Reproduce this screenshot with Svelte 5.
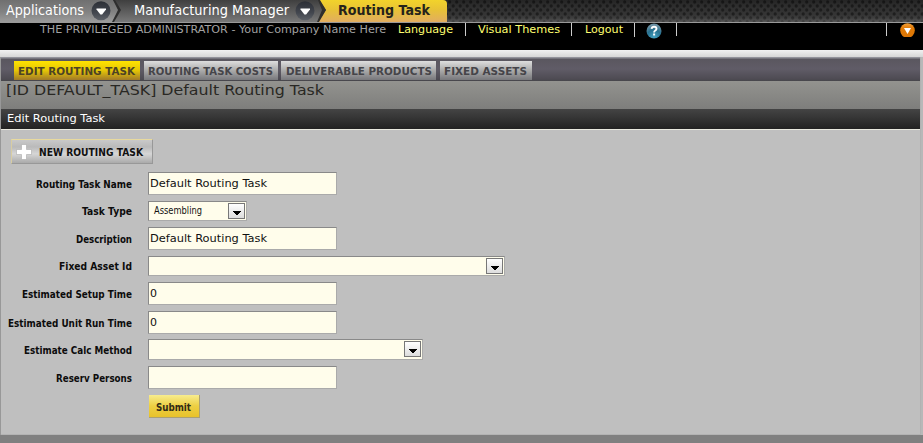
<script>
  const tabs = [
    { label: 'EDIT ROUTING TASK', width: 126, text: 117, active: true },
    { label: 'ROUTING TASK COSTS', width: 134, text: 125 },
    { label: 'DELIVERABLE PRODUCTS', width: 155, text: 146 },
    { label: 'FIXED ASSETS', width: 92, text: 83 }
  ];
  const fields = [
    { label: 'Routing Task Name', value: 'Default Routing Task', width: 189, height: 23, gap: 6, text: 96 },
    { label: 'Task Type', value: 'Assembling', width: 99, height: 20, gap: 6, text: 50, select: true },
    { label: 'Description', value: 'Default Routing Task', width: 189, height: 23, gap: 6, text: 56 },
    { label: 'Fixed Asset Id', value: '', width: 357, height: 20, gap: 6, text: 73, select: true },
    { label: 'Estimated Setup Time', value: '0', width: 189, height: 23, gap: 6, text: 110 },
    { label: 'Estimated Unit Run Time', value: '0', width: 189, height: 23, gap: 5, text: 124 },
    { label: 'Estimate Calc Method', value: '', width: 275, height: 21, gap: 6, text: 108, select: true },
    { label: 'Reserv Persons', value: '', width: 189, height: 23, gap: 6, text: 76 }
  ];
</script>

{#snippet fit(label, width, size, weight, color)}
  <svg class="fit" {width} height="20" style:overflow="visible">
    <text x="0" y="14" textLength={width} lengthAdjust="spacingAndGlyphs" font-size={size} font-weight={weight} fill={color}>{label}</text>
  </svg>
{/snippet}

{#snippet chevron(id)}
  <svg class="chev" width="20" height="20" viewBox="0 0 20 20">
    <defs><linearGradient id={id} x2="0" y2="1"><stop stop-color="#2c2f36"/><stop offset=".6" stop-color="#42464e"/><stop offset="1" stop-color="#5c6067"/></linearGradient></defs>
    <circle cx="10" cy="9.700" r="9.5" fill="url(#{id})"/>
    <path d="M5.500 7.500h9.500v1l-3.900 5h-1.700l-3.900-5z" fill="#fff"/>
  </svg>
{/snippet}

<div class="page">
  <header>
    <svg class="mesh" width="923" height="22">
      <defs>
        <pattern id="mesh" width="7" height="8" patternUnits="userSpaceOnUse">
          <rect width="7" height="8" fill="#343434"/>
          <circle cx="1.7" cy="2" r="1.65" fill="#1c1c1c"/>
          <circle cx="5.2" cy="6" r="1.65" fill="#1c1c1c"/>
        </pattern>
        <linearGradient id="shade" x2="0" y2="1"><stop stop-color="#000" stop-opacity=".3"/><stop offset=".65" stop-color="#333" stop-opacity=".1"/><stop offset="1" stop-color="#aaa" stop-opacity=".3"/></linearGradient>
        <linearGradient id="grey" x2="0" y2="1"><stop stop-color="#707070"/><stop offset=".5" stop-color="#808080"/><stop offset="1" stop-color="#9b9b9b"/></linearGradient>
        <linearGradient id="dark" x2="0" y2="1"><stop stop-color="#3f3f3f"/><stop offset="1" stop-color="#787878"/></linearGradient>
        <linearGradient id="gold" x2="0" y2="1"><stop stop-color="#f2d32b"/><stop offset=".45" stop-color="#e8c236"/><stop offset="1" stop-color="#e2ad61"/></linearGradient>
      </defs>
      <rect width="923" height="22" fill="url(#mesh)"/>
      <rect width="923" height="22" fill="url(#shade)"/>
      <path d="M319 0H443Q447 0 447 4V22H319Z" fill="url(#gold)"/>
      <path d="M110 0H319L326 10L318 22H110Z" fill="url(#dark)"/>
      <path d="M318 0h2l6 10-7 12h-2l5-12z" fill="#302f2c"/>
      <path d="M0 0H113L120 10L112 22H0Z" fill="url(#grey)"/>
      <path d="M113 0h2l6 10-7 12h-2l6-12z" fill="#2e2e2e"/>
    </svg>
    <nav>
      <span class="app a1">{@render fit('Applications', 78, 13.3, 400, '#fff')}</span>
      <span class="c1">{@render chevron('c1')}</span>
      <span class="app a2">{@render fit('Manufacturing Manager', 155, 13.3, 400, '#fff')}</span>
      <span class="c2">{@render chevron('c2')}</span>
      <span class="app a3">{@render fit('Routing Task', 92, 13.3, 700, '#25231b')}</span>
    </nav>
  </header>

  <div class="userbar">
    <span class="u who">{@render fit('THE PRIVILEGED ADMINISTRATOR - Your Company Name Here', 346, 10, 400, '#a2a2a2')}</span>
    <span class="u lang">{@render fit('Language', 55, 10, 400, '#ffff70')}</span>
    <i class="bar b1"></i>
    <span class="u themes">{@render fit('Visual Themes', 82, 10, 400, '#ffff70')}</span>
    <i class="bar b2"></i>
    <span class="u logout">{@render fit('Logout', 38, 10, 400, '#ffff70')}</span>
    <i class="bar b3"></i>
    <svg class="help" width="16" height="16" viewBox="0 0 16 16">
      <defs><radialGradient id="blue" cx=".5" cy=".9" r=".8"><stop stop-color="#46a4c4"/><stop offset=".6" stop-color="#27708f"/><stop offset="1" stop-color="#6c91a3"/></radialGradient></defs>
      <circle cx="8" cy="8" r="7.5" fill="url(#blue)"/>
      <path d="M5.6 5.9Q5.8 3.7 8.1 3.7q2.4 0 2.4 2 0 1.1-1.2 1.8Q8.1 8.200 8.100 9.500" fill="none" stroke="#fff" stroke-width="1.9"/>
      <rect x="7.100" y="10.500" width="2" height="2" fill="#fff"/>
    </svg>
    <i class="bar b4"></i>
    <i class="bar b5"></i>
    <svg class="drop" width="15" height="14" viewBox="0 0 15 14">
      <defs><linearGradient id="orange" x2="0" y2="1"><stop stop-color="#f3a13a"/><stop offset=".35" stop-color="#e17a06"/><stop offset="1" stop-color="#dc7606"/></linearGradient></defs>
      <circle cx="7.500" cy="7.500" r="7.300" fill="url(#orange)"/>
      <path d="M4 5h7L7.500 11z" fill="#fff"/>
    </svg>
  </div>
  <div class="rim"></div>

  <main>
    <div class="tabs">
      {#each tabs as tab}
        <div class="tab" class:active={tab.active} style:width="{tab.width}px">
          {@render fit(tab.label, tab.text, 10, 700, tab.active ? '#4d4324' : '#454449')}
        </div>
      {/each}
    </div>
    <div class="heading">{@render fit('[ID DEFAULT_TASK] Default Routing Task', 318, 14.5, 400, '#292824')}</div>
    <div class="title">{@render fit('Edit Routing Task', 98, 11.3, 400, '#fff')}</div>
    <section>
      <div class="new">
        <svg width="18" height="18" viewBox="0 0 18 18"><path d="M6.500 1.500h5v5h5v5h-5v5h-5v-5h-5v-5h5z" fill="#fff" stroke="#aaa" stroke-width=".6"/></svg>
        <span class="newtext">{@render fit('NEW ROUTING TASK', 104, 10.3, 700, '#111')}</span>
      </div>
      <form>
        {#each fields as f}
          <div class="row" style:height="{f.height}px" style:margin-bottom="{f.gap}px">
            <div class="label">{@render fit(f.label, f.text, 9.8, 700, '#0c0c0c')}</div>
            <div class="control" class:select={f.select} style:width="{f.width}px">
              {#if f.select}
                <span class="choice">{#if f.value}{@render fit(f.value, 48, 9.7, 400, '#111')}{/if}</span>
                <svg class="arrow" width="17" height="16"><path d="M4 7h8v1h-1v1h-1v1H9v1H7v-1H6V9H5V8H4z" fill="#000"/></svg>
              {:else if f.value}
                {@render fit(f.value, f.value === '0' ? 7 : 117, 10.3, 400, '#111')}
              {/if}
            </div>
          </div>
        {/each}
        <div class="submit">{@render fit('Submit', 35, 10.3, 700, '#302a17')}</div>
      </form>
    </section>
  </main>
</div>

<style>
  :global(body) { background: #808080; overflow: hidden; }
  .page { width: 923px; height: 443px; background: #808080; font-family: "DejaVu Sans", Verdana, sans-serif; overflow: hidden; }
  .page * { box-sizing: border-box; }
  svg { display: block; flex-shrink: 0; }
  header { height: 22px; position: relative; }
  .mesh { position: absolute; inset: 0; }
  nav { position: relative; display: flex; height: 22px; }
  .app { margin-top: 1px; }
  .a1 { margin-left: 6px; }
  .c1 { margin: 1px 0 0 7px; }
  .a2 { margin-left: 23px; }
  .c2 { margin: 1px 0 0 6px; }
  .a3 { margin-left: 23px; }
  .userbar { height: 28px; background: #000; border-top: 1px solid #999; display: flex; }
  .u { margin-top: -4px; }
  .who { margin-left: 40px; }
  .lang { margin-left: 12px; }
  .bar { width: 1px; height: 13px; background: #ccc; flex-shrink: 0; }
  .b1 { margin-left: 12px; }
  .themes { margin-left: 12px; }
  .b2 { margin-left: 11px; }
  .logout { margin-left: 13px; }
  .b3 { margin-left: 11px; height: 14px; }
  .help { margin: 0 0 0 11px; }
  .b4 { margin-left: 14px; }
  .b5 { margin-left: 209px; }
  .drop { margin-left: 13px; }
  .rim { height: 7px; background: linear-gradient(#f1f1f1, #d6d6d6); }
  main { width: 921px; height: 378px; border-left: 1px solid #989898; border-right: 1px solid #b2b2b2; box-shadow: 2px 0 #b8b8b8; }
  .tabs { height: 24px; padding: 4px 0 0 13px; display: flex; background: linear-gradient(#92929a 0, #92929a 1px, #5a575f 2px, #605c67 12px, #4e4b53 22px, #47464b); }
  .tab { height: 19px; margin-right: 4px; padding-left: 4px; background: linear-gradient(#dedede, #aaa 50%, #77777b); flex-shrink: 0; }
  .tab:nth-child(2) { margin-right: 3px; }
  .tab:nth-child(3) { padding-left: 5px; }
  .tab.active { background: linear-gradient(#ffe300, #e5c506 50%, #a07928); }
  .heading { height: 28px; padding-left: 5px; background: linear-gradient(#93938f, #7e7e7c); }
  .title { display: flex; height: 21px; padding: 0 0 0 6px; background: linear-gradient(#444, #222); border-bottom: 1px solid #e9e9df; }
  .title :global(svg) { margin-top: -1px; }
  section { height: 305px; padding: 9px 0 0 10px; background: #bfbfbf; border-bottom: 1px solid #b3b3b3; }
  .new { width: 142px; height: 25px; display: flex; align-items: center; padding-left: 3px; background: linear-gradient(#c9c9c9, #bababa 30%, #d6d6d6 60%, #aaa); border: 1px solid #989898; border-top-color: #e8da9e; border-left-color: #d8cda2; }
  .newtext { margin: 0 0 0 6px; }
  form { margin-top: 8px; }
  .row { display: flex; align-items: center; }
  .label { width: 121px; display: flex; justify-content: flex-end; margin-right: 16px; }
  .control { height: 100%; background: #fffdeb; border: 1px solid #aaa; border-top-color: #898989; border-left-color: #898989; padding: 0 0 0 1px; }
  .control.select { padding: 1px 1px 1px 5px; display: flex; justify-content: space-between; }
  .choice { margin-top: -3px; }
  .arrow { height: 16px; background: linear-gradient(#fff, #ddd); border: 1px solid #777; }
  .submit { width: 51px; height: 23px; margin-left: 138px; padding: 2px 0 0 7px; background: linear-gradient(#f8ec8d, #edcf43 50%, #e8c22b); border-right: 1px solid #aaa073; border-bottom: 1px solid #aaa073; }
</style>
